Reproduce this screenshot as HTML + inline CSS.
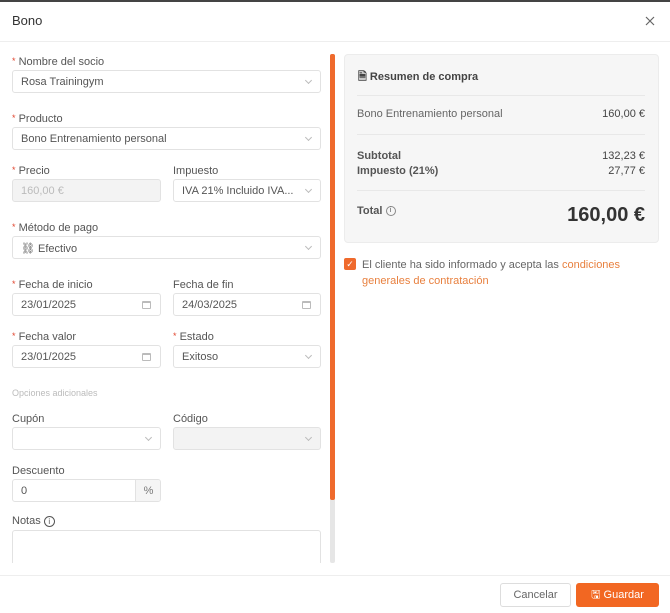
<!DOCTYPE html>
<html><head><style>
*{box-sizing:border-box;margin:0;padding:0}
body{width:670px;height:613px;background:#fff;font-family:"Liberation Sans",sans-serif;color:#555;position:relative;overflow:hidden;font-size:11px}
.a{position:absolute}
.lbl{position:absolute;font-size:11px;color:#555}
.lbl b{color:#e0452e;font-weight:normal;font-size:9px;vertical-align:top}
.inp{position:absolute;height:23px;border:1px solid #e2e2e2;border-radius:3px;background:#fff;font-size:11px;color:#555;padding:5px 8px;white-space:nowrap;overflow:hidden}
.chev{position:absolute;right:9px;top:7px;width:5px;height:5px;border-right:1px solid #bbb;border-bottom:1px solid #bbb;transform:rotate(45deg)}
.cal{position:absolute;right:9px;top:7px;width:9px;height:8px;border:1px solid #bbb;border-top-width:2px;border-radius:1px}
.dis{background:#f3f3f3;color:#bbb}
.hr{position:absolute;height:1px;background:#e8e8e8}
</style></head><body>
<div class="a" style="left:0;top:0;width:670px;height:2px;background:#444"></div>
<div class="a" style="left:12px;top:13px;font-size:13px;color:#333">Bono</div>
<svg class="a" style="left:645px;top:16px" width="10" height="10"><path d="M1 1L9 9M9 1L1 9" stroke="#666" stroke-width="1.2"/></svg>
<div class="hr" style="left:0;top:41px;width:670px;background:#eee"></div>

<div class="lbl" style="left:12px;top:56px"><b>*</b> Nombre del socio</div>
<div class="inp" style="left:12px;top:70px;width:309px">Rosa Trainingym<span class="chev"></span></div>
<div class="lbl" style="left:12px;top:113px"><b>*</b> Producto</div>
<div class="inp" style="left:12px;top:127px;width:309px">Bono Entrenamiento personal<span class="chev"></span></div>
<div class="lbl" style="left:12px;top:165px"><b>*</b> Precio</div>
<div class="inp dis" style="left:12px;top:179px;width:149px">160,00 €</div>
<div class="lbl" style="left:173px;top:165px">Impuesto</div>
<div class="inp" style="left:173px;top:179px;width:148px">IVA 21% Incluido IVA...<span class="chev"></span></div>
<div class="lbl" style="left:12px;top:222px"><b>*</b> Método de pago</div>
<div class="inp" style="left:12px;top:236px;width:309px">⛓ Efectivo<span class="chev"></span></div>
<div class="lbl" style="left:12px;top:279px"><b>*</b> Fecha de inicio</div>
<div class="inp" style="left:12px;top:293px;width:149px">23/01/2025<span class="cal"></span></div>
<div class="lbl" style="left:173px;top:279px">Fecha de fin</div>
<div class="inp" style="left:173px;top:293px;width:148px">24/03/2025<span class="cal"></span></div>
<div class="lbl" style="left:12px;top:331px"><b>*</b> Fecha valor</div>
<div class="inp" style="left:12px;top:345px;width:149px">23/01/2025<span class="cal"></span></div>
<div class="lbl" style="left:173px;top:331px"><b>*</b> Estado</div>
<div class="inp" style="left:173px;top:345px;width:148px">Exitoso<span class="chev"></span></div>
<div class="lbl" style="left:12px;top:388px;font-size:9px;color:#bbb">Opciones adicionales</div>
<div class="lbl" style="left:12px;top:413px">Cupón</div>
<div class="inp" style="left:12px;top:427px;width:149px"><span class="chev"></span></div>
<div class="lbl" style="left:173px;top:413px">Código</div>
<div class="inp dis" style="left:173px;top:427px;width:148px"><span class="chev"></span></div>
<div class="lbl" style="left:12px;top:465px">Descuento</div>
<div class="inp" style="left:12px;top:479px;width:149px">0<span class="a" style="left:122px;top:0;width:26px;height:21px;background:#f5f5f5;border-left:1px solid #e2e2e2;text-align:center;padding-top:5px;color:#777">%</span></div>
<div class="lbl" style="left:12px;top:515px">Notas <span style="display:inline-block;width:11px;height:11px;border:1px solid #555;border-radius:50%;font-size:8px;text-align:center;line-height:9px;vertical-align:middle">i</span></div>
<div class="inp" style="left:12px;top:530px;width:309px;height:40px;border-bottom:none;border-radius:3px 3px 0 0"></div>
<div class="a" style="left:0;top:563px;width:330px;height:12px;background:#fff"></div>

<div class="a" style="left:330px;top:54px;width:5px;height:509px;background:#e6e6e6;border-radius:2px"></div>
<div class="a" style="left:330px;top:54px;width:5px;height:446px;background:#ef6a2d;border-radius:2px"></div>

<div class="a" style="left:344px;top:54px;width:315px;height:189px;background:#f6f6f6;border:1px solid #ececec;border-radius:4px"></div>
<div class="a" style="left:358px;top:68px;font-size:11px;font-weight:bold;color:#444">🗎 Resumen de compra</div>
<div class="hr" style="left:357px;top:95px;width:288px"></div>
<div class="a" style="left:357px;top:108px;color:#666">Bono Entrenamiento personal</div>
<div class="a" style="right:25px;top:108px;color:#444">160,00 €</div>
<div class="hr" style="left:357px;top:134px;width:288px"></div>
<div class="a" style="left:357px;top:149px;font-weight:bold;color:#555;line-height:15px">Subtotal<br>Impuesto (21%)</div>
<div class="a" style="right:25px;top:149px;color:#444;text-align:right;line-height:15px">132,23 €<br>27,77 €</div>
<div class="hr" style="left:357px;top:190px;width:288px"></div>
<div class="a" style="left:357px;top:205px;font-weight:bold;color:#555">Total <span style="display:inline-block;width:10px;height:10px;border:1px solid #888;border-radius:50%;font-size:7px;text-align:center;line-height:8px;font-weight:normal;vertical-align:middle">i</span></div>
<div class="a" style="right:25px;top:204px;font-size:20px;font-weight:bold;color:#333">160,00 €</div>

<div class="a" style="left:344px;top:258px;width:12px;height:12px;background:#ef6a2d;border-radius:2px;color:#fff;font-size:9px;text-align:center;line-height:12px">✓</div>
<div class="a" style="left:362px;top:257px;width:290px;line-height:16px;color:#666">El cliente ha sido informado y acepta las <span style="color:#e8803f">condiciones generales de contratación</span></div>

<div class="hr" style="left:0;top:575px;width:670px;background:#eee"></div>
<div class="a" style="left:500px;top:583px;width:71px;height:24px;border:1px solid #ddd;border-radius:3px;text-align:center;line-height:22px;color:#666">Cancelar</div>
<div class="a" style="left:576px;top:583px;width:83px;height:24px;background:#f26722;border-radius:3px;text-align:center;line-height:24px;color:#fff">🖫 Guardar</div>
</body></html>
